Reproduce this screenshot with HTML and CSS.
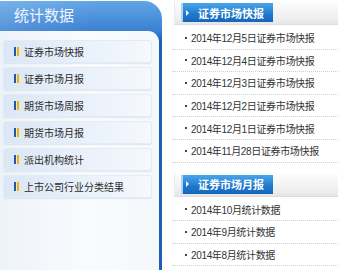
FILE: index.html
```html
<!DOCTYPE html>
<html lang="zh-CN">
<head>
    <meta charset="UTF-8">
    <title>统计数据</title>
    <link rel="stylesheet" href="styles.css">
</head>
<body>
    <div class="page">
        <div class="side">
            <div class="side-title">统计数据</div>
            <div class="side-body">
                <a class="menu-item" href="#"><span class="mark"></span>证券市场快报</a>
                <a class="menu-item" href="#"><span class="mark"></span>证券市场月报</a>
                <a class="menu-item" href="#"><span class="mark"></span>期货市场周报</a>
                <a class="menu-item" href="#"><span class="mark"></span>期货市场月报</a>
                <a class="menu-item" href="#"><span class="mark"></span>派出机构统计</a>
                <a class="menu-item" href="#"><span class="mark"></span>上市公司行业分类结果</a>
            </div>
        </div>

        <div class="main">
            <div class="section">
                <div class="section-bar">
                    <div class="section-tab"><span class="arrow"></span>证券市场快报</div>
                </div>
                <ul class="news">
                    <li><a href="#">2014年12月5日证券市场快报</a></li>
                    <li><a href="#">2014年12月4日证券市场快报</a></li>
                    <li><a href="#">2014年12月3日证券市场快报</a></li>
                    <li><a href="#">2014年12月2日证券市场快报</a></li>
                    <li><a href="#">2014年12月1日证券市场快报</a></li>
                    <li><a href="#">2014年11月28日证券市场快报</a></li>
                </ul>
            </div>

            <div class="section">
                <div class="section-bar">
                    <div class="section-tab"><span class="arrow"></span>证券市场月报</div>
                </div>
                <ul class="news">
                    <li><a href="#">2014年10月统计数据</a></li>
                    <li><a href="#">2014年9月统计数据</a></li>
                    <li><a href="#">2014年8月统计数据</a></li>
                </ul>
            </div>
        </div>
    </div>
</body>
</html>
```

FILE: styles.css
```css
body {
    margin: 0;
    font-family: "Liberation Sans", "Noto Sans CJK SC", sans-serif;
    background-color: #fff;
    color: #333;
    overflow: hidden;
}
a {
    color: #333;
    text-decoration: none;
}
.page {
    display: flex;
    height: 270px;
}

/* left column */
.side {
    width: 162px;
    flex: none;
    margin-top: 1px;
    background: linear-gradient(#62a5e6, #3a80d2 30px, #1d5fb5 40px);
    border-top-right-radius: 18px;
    display: flex;
    flex-direction: column;
}
.side-title {
    height: 30px;
    line-height: 28px;
    padding-left: 14px;
    font-family: "Noto Sans CJK SC", sans-serif;
    font-size: 15px;
    color: #eef5fd;
    background: linear-gradient(100deg, rgba(255,255,255,0.15), rgba(255,255,255,0) 60%);
    border-top-right-radius: 18px;
}
.side-body {
    flex: 1;
    margin-right: 3px;
    padding-top: 9px;
    background: linear-gradient(to right, #eef3f9, #f9fbfd 55%, #f5f9fc);
    border-top-right-radius: 11px;
}
.menu-item {
    display: flex;
    align-items: center;
    height: 23px;
    width: 149px;
    box-sizing: border-box;
    margin: 0 0 4px 3px;
    padding-left: 10px;
    font-family: "Noto Sans CJK SC", sans-serif;
    font-size: 10px;
    color: #2a2a2a;
    background: linear-gradient(to right, #dbe7f5, #e9f1fa 55%, #f6f9fd);
    border: 1px solid #e3ebf5;
    border-radius: 3px;
    box-shadow: 0 1px 1px rgba(150,175,205,0.25);
}
.mark {
    width: 2px;
    height: 9px;
    margin-right: 5px;
    background-color: #2355b5;
    border-right: 2px solid #f2b600;
    padding-right: 1px;
    background-clip: content-box;
}

/* right column */
.main {
    flex: 1;
    margin-left: 10px;
}
.section {
    margin-bottom: 10px;
}
.section-bar {
    height: 24px;
    box-sizing: border-box;
    margin: 1px 0 2px 2px;
    padding: 2px 0 0 6px;
    background: linear-gradient(#fdfdfd, #f0f0f0 70%, #e6e6e6);
    border-bottom: 1px solid #dddddd;
    border-left: 1px solid #ececec;
}
.section-tab {
    display: flex;
    align-items: center;
    width: 92px;
    height: 19px;
    box-sizing: border-box;
    padding-left: 3px;
    font-family: "Noto Sans CJK SC", sans-serif;
    font-size: 11px;
    font-weight: bold;
    color: #fff;
    background: linear-gradient(#4aa6ea, #1f78cc 60%, #1566bd);
    border-left: 2px solid #a8d6f6;
}
.arrow {
    width: 0;
    height: 0;
    margin-right: 9px;
    border-top: 3px solid transparent;
    border-bottom: 3px solid transparent;
    border-left: 3px solid #fff;
}
.news {
    list-style: none;
    margin: 0;
    padding: 0;
}
.news li {
    display: flex;
    align-items: center;
    height: 22.6px;
    box-sizing: border-box;
    padding-left: 13px;
    font-size: 10px;
    letter-spacing: -0.35px;
    border-bottom: 1px dotted #cfcfcf;
}
.news li::before {
    content: "";
    width: 2px;
    height: 2px;
    margin-right: 4px;
    background-color: #444;
}
```
